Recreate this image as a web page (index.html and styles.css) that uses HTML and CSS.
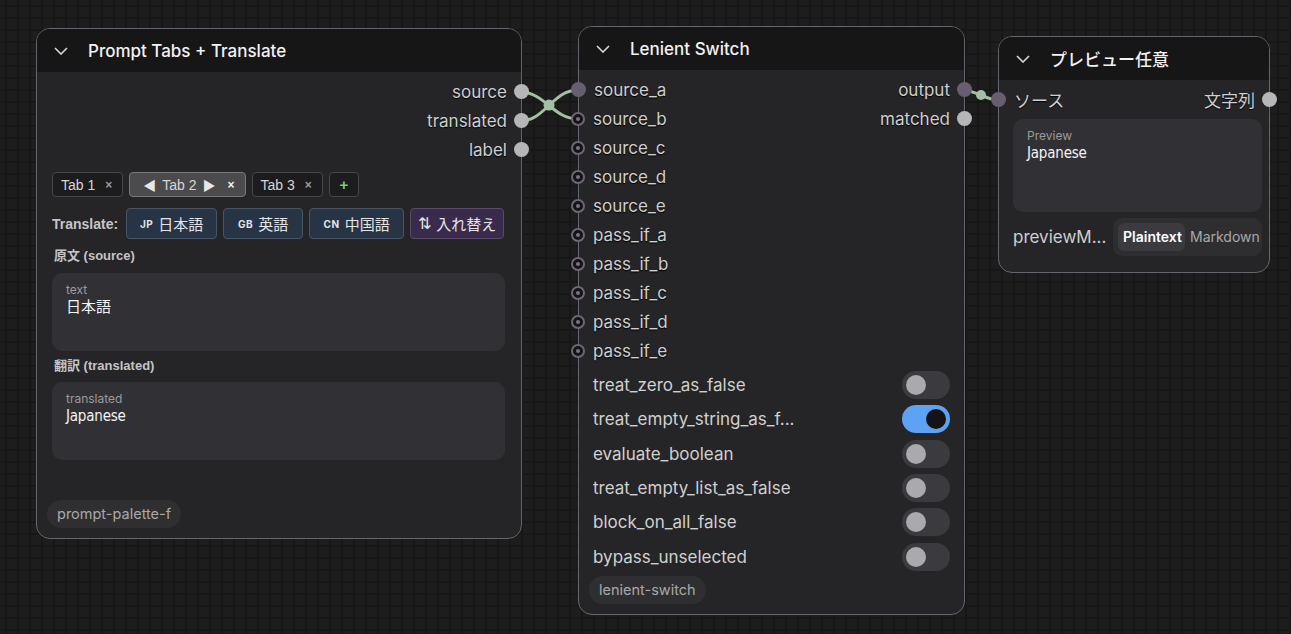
FILE: index.html
```html
<!DOCTYPE html>
<html lang="ja">
<head>
  <meta charset="UTF-8" />
  <meta name="viewport" content="width=device-width, initial-scale=1.0"/>
  <title>Graph</title>
  <link rel="stylesheet" href="styles.css">
</head>
<body>
  <div id="canvas">
    <!-- links between sockets -->
    <svg id="links" width="1291" height="634">
      <path d="M520 92 C 545 92, 553 119, 578 119" />
      <path d="M520 121 C 545 121, 553 90, 578 90" />
      <path d="M963 90 C 975 90, 986 100, 998 100" />
      <circle cx="549" cy="105" r="5.5" />
      <circle cx="981" cy="95" r="5" />
    </svg>

    <!-- Prompt Tabs + Translate -->
    <div class="node" id="nodePrompt">
      <div class="node-header">
        <svg class="chevron" width="14" height="8" viewBox="0 0 14 8"><polyline points="1,1 7,7 13,1" /></svg>
        <span class="node-title">Prompt Tabs + Translate</span>
      </div>
      <div class="node-body">
        <div class="slots">
          <div class="slot-col outputs">
            <div class="slot out"><span>source</span><i class="dot gray"></i></div>
            <div class="slot out"><span>translated</span><i class="dot gray"></i></div>
            <div class="slot out"><span>label</span><i class="dot gray"></i></div>
          </div>
        </div>
        <div class="widgets">
          <div class="tabs">
            <div class="tab">Tab 1 <b class="x">×</b></div>
            <div class="tab active"><span class="arrow">◀</span> Tab 2 <span class="arrow">▶</span> <b class="x">×</b></div>
            <div class="tab">Tab 3 <b class="x">×</b></div>
            <div class="tab add">+</div>
          </div>
          <div class="translate-row">
            <span class="translate-label">Translate:</span>
            <button class="lang ja"><small>JP</small> 日本語</button>
            <button class="lang en"><small>GB</small> 英語</button>
            <button class="lang zh"><small>CN</small> 中国語</button>
            <button class="lang swap"><span class="swap-icon">⇅</span> 入れ替え</button>
          </div>
          <div class="section-label first">原文 (source)</div>
          <div class="textbox">
            <div class="textbox-label">text</div>
            <div class="textbox-value cjk">日本語</div>
          </div>
          <div class="section-label">翻訳 (translated)</div>
          <div class="textbox">
            <div class="textbox-label">translated</div>
            <div class="textbox-value narrow">Japanese</div>
          </div>
        </div>
        <div class="node-footer"><span class="badge">prompt-palette-f</span></div>
      </div>
    </div>

    <!-- Lenient Switch -->
    <div class="node" id="nodeSwitch">
      <div class="node-header">
        <svg class="chevron" width="14" height="8" viewBox="0 0 14 8"><polyline points="1,1 7,7 13,1" /></svg>
        <span class="node-title">Lenient Switch</span>
      </div>
      <div class="node-body">
        <div class="slots">
          <div class="slot-col inputs">
            <div class="slot in"><i class="dot purple"></i><span>source_a</span></div>
            <div class="slot in"><i class="dot hollow"></i><span>source_b</span></div>
            <div class="slot in"><i class="dot hollow"></i><span>source_c</span></div>
            <div class="slot in"><i class="dot hollow"></i><span>source_d</span></div>
            <div class="slot in"><i class="dot hollow"></i><span>source_e</span></div>
            <div class="slot in"><i class="dot hollow"></i><span>pass_if_a</span></div>
            <div class="slot in"><i class="dot hollow"></i><span>pass_if_b</span></div>
            <div class="slot in"><i class="dot hollow"></i><span>pass_if_c</span></div>
            <div class="slot in"><i class="dot hollow"></i><span>pass_if_d</span></div>
            <div class="slot in"><i class="dot hollow"></i><span>pass_if_e</span></div>
          </div>
          <div class="slot-col outputs">
            <div class="slot out"><span>output</span><i class="dot purple"></i></div>
            <div class="slot out"><span>matched</span><i class="dot gray"></i></div>
          </div>
        </div>
        <div class="toggles">
          <div class="toggle-row"><span>treat_zero_as_false</span><i class="toggle"></i></div>
          <div class="toggle-row"><span>treat_empty_string_as_f...</span><i class="toggle on"></i></div>
          <div class="toggle-row"><span>evaluate_boolean</span><i class="toggle"></i></div>
          <div class="toggle-row"><span>treat_empty_list_as_false</span><i class="toggle"></i></div>
          <div class="toggle-row"><span>block_on_all_false</span><i class="toggle"></i></div>
          <div class="toggle-row"><span>bypass_unselected</span><i class="toggle"></i></div>
        </div>
        <div class="node-footer"><span class="badge">lenient-switch</span></div>
      </div>
    </div>

    <!-- プレビュー任意 -->
    <div class="node" id="nodePreview">
      <div class="node-header">
        <svg class="chevron" width="14" height="8" viewBox="0 0 14 8"><polyline points="1,1 7,7 13,1" /></svg>
        <span class="node-title cjk">プレビュー任意</span>
      </div>
      <div class="node-body">
        <div class="slots">
          <div class="slot-col inputs">
            <div class="slot in"><i class="dot purple"></i><span class="cjk">ソース</span></div>
          </div>
          <div class="slot-col outputs">
            <div class="slot out"><span class="cjk">文字列</span><i class="dot gray"></i></div>
          </div>
        </div>
        <div class="preview-wrap">
          <div class="textbox preview">
            <div class="textbox-label">Preview</div>
            <div class="textbox-value narrow">Japanese</div>
          </div>
          <div class="mode-row">
            <span class="mode-label">previewM...</span>
            <div class="segment">
              <span class="seg active">Plaintext</span>
              <span class="seg">Markdown</span>
            </div>
          </div>
        </div>
      </div>
    </div>
  </div>
</body>
</html>
```

FILE: styles.css
```css
body {
  margin: 0;
  padding: 0;
  font-family: Inter, 'Noto Sans', 'Noto Sans CJK JP', sans-serif;
  background-color: #1d1d1d;
  background-image:
    linear-gradient(#171717 2px, transparent 2px),
    linear-gradient(90deg, #171717 2px, transparent 2px);
  background-size: 12px 12px;
  background-position: 5px 5px;
  color: #d0d0d0;
  overflow: hidden;
}

#canvas {
  position: relative;
  width: 1291px;
  height: 634px;
}

#links {
  position: absolute;
  left: 0;
  top: 0;
  z-index: 0;
  pointer-events: none;
}

#links path {
  fill: none;
  stroke: #a4bfa2;
  stroke-width: 3;
}

#links circle {
  fill: #a4bfa2;
}

.cjk {
  font-family: Inter, 'Noto Sans CJK JP', sans-serif;
}

/* nodes sit on the free canvas */
.node {
  position: absolute;
  box-sizing: border-box;
  border: 1px solid #65656d;
  border-radius: 14px;
  background: #252527;
  display: flex;
  flex-direction: column;
  z-index: 1;
}

#nodePrompt {
  left: 36px;
  top: 28px;
  width: 486px;
  height: 511px;
}

#nodeSwitch {
  left: 578px;
  top: 26px;
  width: 387px;
  height: 589px;
}

#nodePreview {
  left: 998px;
  top: 36px;
  width: 272px;
  height: 237px;
}

.node-header {
  height: 43px;
  background: #161616;
  border-radius: 13px 13px 0 0;
  display: flex;
  align-items: center;
  padding-left: 17px;
  gap: 20px;
  flex-shrink: 0;
}

.chevron polyline {
  fill: none;
  stroke: #d8d8d8;
  stroke-width: 1.6;
}

.node-title {
  font-size: 17px;
  color: #f2f2f2;
  font-weight: 450;
}

.node-body {
  flex: 1;
  display: flex;
  flex-direction: column;
  padding-top: 5px;
}

.slots {
  display: flex;
  justify-content: space-between;
}

.slot-col {
  display: flex;
  flex-direction: column;
}

.slot-col.outputs {
  margin-left: auto;
  align-items: flex-end;
}

.slot {
  height: 29px;
  display: flex;
  align-items: center;
  font-size: 17px;
  color: #cfcfcf;
  text-shadow: 0 1px 1px #000;
}

.slot.in .dot {
  margin-left: -8px;
  margin-right: 8px;
}

.slot.out .dot {
  margin-left: 7px;
  margin-right: -8px;
}

.dot {
  width: 15px;
  height: 15px;
  border-radius: 50%;
  box-sizing: border-box;
  display: block;
  position: relative;
  z-index: 3;
}

.dot.gray {
  background: #b6b6b8;
}

.dot.purple {
  background: #675e6f;
}

.dot.hollow {
  width: 14px;
  height: 14px;
  background: #141414;
  border: 2px solid #6f6577;
}

.dot.hollow::after {
  content: "";
  position: absolute;
  left: 3px;
  top: 3px;
  width: 4px;
  height: 4px;
  border-radius: 50%;
  background: #7c7284;
}

/* prompt tabs widget */
.widgets {
  padding: 0 16px 0 15px;
  display: flex;
  flex-direction: column;
  font-family: 'Liberation Sans', Arial, 'Noto Sans CJK JP', sans-serif;
}

.tabs {
  display: flex;
  gap: 6px;
  margin-top: 8px;
}

.tab {
  height: 25px;
  box-sizing: border-box;
  border: 1px solid #46464a;
  background: #1c1c1e;
  border-radius: 4px;
  padding: 0 10px 0 8px;
  display: flex;
  align-items: center;
  font-size: 14px;
  color: #d6d6d6;
  gap: 4px;
  white-space: nowrap;
}

.tab .x {
  font-size: 12px;
  color: #9a9a9a;
  margin-left: 6px;
}

.tab.active {
  background: #4b4b4d;
  border-color: #78787c;
  padding: 0 10px 0 11px;
}

.tab.active .x {
  color: #f2f2f2;
  margin-left: 6px;
}

.tab .arrow {
  font-size: 13px;
  color: #e8e8e8;
  margin: 0 2px;
}

.tab.add {
  width: 30px;
  padding: 0;
  justify-content: center;
  color: #77cc77;
  font-weight: bold;
  font-size: 15px;
}

.translate-row {
  display: flex;
  align-items: center;
  gap: 6px;
  margin-top: 11px;
}

.translate-label {
  font-weight: bold;
  font-size: 14px;
  color: #c6c6c6;
  margin-right: 2px;
}

.lang {
  height: 31px;
  box-sizing: border-box;
  border: 1px solid #4a5563;
  border-radius: 4px;
  background: #263446;
  color: #e4e4e4;
  font-family: Inter, 'Noto Sans CJK JP', sans-serif;
  font-size: 15px;
  padding: 0;
  display: flex;
  align-items: center;
  justify-content: center;
  gap: 5px;
  white-space: nowrap;
}

.lang.ja { width: 91px; }
.lang.en { width: 80px; }
.lang.zh { width: 95px; }

.lang small {
  font-size: 10px;
  font-weight: bold;
  letter-spacing: 0.5px;
}

.lang.swap {
  width: 94px;
  background: #3a2a4b;
  border-color: #5a4a66;
}

.swap-icon {
  font-family: 'DejaVu Sans', sans-serif;
  font-size: 16px;
}

.section-label {
  margin-top: 7px;
  height: 16px;
  line-height: 16px;
  font-size: 13px;
  font-weight: bold;
  color: #c4c4c4;
  padding-left: 2px;
  font-family: 'Liberation Sans', Arial, 'Noto Sans CJK JP', sans-serif;
}

.section-label.first {
  margin-top: 9px;
}

.textbox {
  margin-top: 8px;
  height: 78px;
  box-sizing: border-box;
  background: #313135;
  border-radius: 10px;
  padding: 10px 14px;
  font-family: Inter, 'Noto Sans CJK JP', sans-serif;
}

.section-label.first + .textbox {
  margin-top: 9px;
}

.textbox-label {
  font-size: 12px;
  color: #9b9b9b;
  line-height: 14px;
}

.textbox-value {
  font-size: 15px;
  color: #f4f4f4;
  line-height: 20px;
}

.textbox-value.narrow {
  font-family: 'DejaVu Sans Condensed', 'DejaVu Sans', sans-serif;
  font-stretch: condensed;
  font-size: 15px;
  letter-spacing: -0.2px;
}

.node-footer {
  margin-top: auto;
  padding: 0 0 10px 10px;
}

.badge {
  display: inline-block;
  height: 28px;
  line-height: 28px;
  padding: 0 10px;
  border-radius: 14px;
  background: #2f2f31;
  color: #a9a9a9;
  font-size: 14.5px;
}

/* switch toggles */
.toggles {
  margin-top: 3px;
  padding: 0 14px 0 14px;
}

.toggle-row {
  height: 34.3px;
  display: flex;
  align-items: center;
  justify-content: space-between;
  font-size: 17px;
  color: #d0d0d0;
}

.toggle {
  width: 48px;
  height: 28px;
  border-radius: 14px;
  background: #3b3b3f;
  position: relative;
  display: block;
}

.toggle::after {
  content: "";
  position: absolute;
  left: 4px;
  top: 4px;
  width: 20px;
  height: 20px;
  border-radius: 50%;
  background: #a9a9ae;
}

.toggle.on {
  background: #5ea2f3;
}

.toggle.on::after {
  left: 24px;
  background: #141416;
}

/* preview */
.preview-wrap {
  padding: 0 7px 0 14px;
}

.textbox.preview {
  margin-top: 5px;
  height: 93px;
}

.mode-row {
  margin-top: 6px;
  display: flex;
  align-items: center;
  justify-content: space-between;
}

.mode-label {
  font-size: 17px;
  color: #cfcfcf;
}

.segment {
  height: 38px;
  width: 149px;
  box-sizing: border-box;
  background: #2e2e31;
  border-radius: 9px;
  padding: 5px;
  display: flex;
  align-items: center;
  font-size: 14px;
}

.seg {
  height: 28px;
  line-height: 28px;
  padding: 0 5px;
  color: #a8a8a8;
}

.seg.active {
  background: #3b3b3f;
  border-radius: 6px;
  color: #fff;
  font-weight: 600;
  width: 57px;
}
```
